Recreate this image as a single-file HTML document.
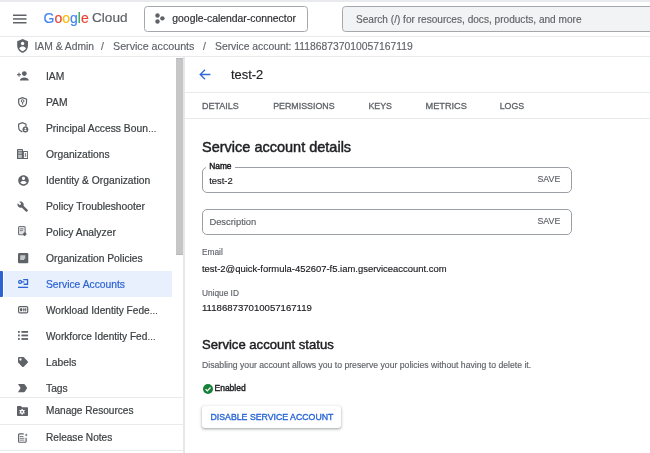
<!DOCTYPE html>
<html><head><meta charset="utf-8">
<style>
*{box-sizing:border-box;margin:0;padding:0}
html,body{width:650px;height:453px;overflow:hidden;background:#fff;font-family:"Liberation Sans",sans-serif;color:#202124}
#wrap{position:absolute;left:0;top:0;width:650px;height:453px;will-change:transform;background:#fff}
.a{position:absolute;white-space:nowrap;line-height:1;-webkit-text-stroke:0.15px currentColor}
svg{position:absolute;overflow:visible}
.ln{position:absolute;background:#e8eaed}
.nt{position:absolute;left:46px;font-size:10.3px;line-height:1;color:#3c4043;-webkit-text-stroke:0.2px currentColor;white-space:nowrap}
.tab{position:absolute;top:101.7px;font-size:9px;line-height:1;color:#5f6368;-webkit-text-stroke:0.3px currentColor;white-space:nowrap}
.ic{fill:#5f6368}
.bc{color:#5f6368;font-size:10.3px;top:42.4px}
</style></head><body><div id="wrap">
<!-- top bar -->
<div class="ln" style="left:0;top:0;width:650px;height:2px"></div>
<svg style="left:13px;top:14px" width="14" height="10" viewBox="0 0 14 10"><rect x="0" y="0.5" width="13.5" height="1.5" fill="#5f6368"/><rect x="0" y="4.2" width="13.5" height="1.5" fill="#5f6368"/><rect x="0" y="8" width="13.5" height="1.5" fill="#5f6368"/></svg>
<div class="a" style="left:43.5px;top:10.8px;font-size:14px;-webkit-text-stroke:0.2px currentColor"><span style="color:#4285f4">G</span><span style="color:#ea4335">o</span><span style="color:#fbbc04">o</span><span style="color:#4285f4">g</span><span style="color:#34a853">l</span><span style="color:#ea4335">e</span></div>
<div class="a" style="left:92px;top:10.8px;font-size:13.6px;color:#5f6368;-webkit-text-stroke:0.2px currentColor">Cloud</div>
<div style="position:absolute;left:144px;top:6px;width:164px;height:25.8px;border:1px solid #a4a8ac;border-radius:3.5px"></div>
<svg style="left:155px;top:12.6px" width="10" height="10" viewBox="0 0 10 10"><circle cx="2.5" cy="2.5" r="2.2" fill="#5f6368"/><circle cx="7.4" cy="5.35" r="2.2" fill="#5f6368"/><circle cx="2.5" cy="8.45" r="2.2" fill="#5f6368"/></svg>
<div class="a" style="left:172.3px;top:13.5px;font-size:10.4px;color:#303134;-webkit-text-stroke:0.2px currentColor">google-calendar-connector</div>
<div style="position:absolute;left:342px;top:5.8px;width:330px;height:26px;border:1px solid #a4a8ac;border-radius:3.5px;background:#f1f3f4"></div>
<div class="a" style="left:356px;top:14.6px;font-size:10.1px;color:#5f6368">Search (/) for resources, docs, products, and more</div>
<div class="ln" style="left:0;top:36px;width:650px;height:1px"></div>
<!-- breadcrumb -->
<svg style="left:16.9px;top:39.3px" width="11.2" height="13.8" viewBox="0 0 12 14.5" preserveAspectRatio="none"><path d="M6 0L.2 2.3V6.8c0 3.6 2.4 6.9 5.8 7.7 3.4-.8 5.8-4.1 5.8-7.7V2.3z" fill="#5f6368"/><circle cx="6" cy="4.8" r="1.85" fill="#fff"/><path d="M2.4 10c.8-1.3 2.1-2 3.6-2s2.8.7 3.6 2c-.8 1.3-2 2.3-3.6 2.8-1.6-.5-2.8-1.5-3.6-2.8z" fill="#fff"/></svg>
<div class="a bc" style="left:34.5px">IAM &amp; Admin</div>
<div class="a bc" style="left:101px">/</div>
<div class="a bc" style="left:113px;font-size:10.7px;top:41px">Service accounts</div>
<div class="a bc" style="left:203px">/</div>
<div class="a bc" style="left:215px;font-size:10.35px">Service account: 111868737010057167119</div>
<div class="ln" style="left:0;top:56px;width:650px;height:1px"></div>
<!-- nav -->
<div class="ln" style="left:183.2px;top:57px;width:1.6px;height:396px;background:#e6e7e9"></div>
<div style="position:absolute;left:176.3px;top:57.5px;width:6.8px;height:197px;background:#c6c6c6;border-top:1px solid #b8b8b8;border-bottom:1px solid #b8b8b8"></div>
<div style="position:absolute;left:4px;top:270.5px;width:168px;height:26px;background:#e8f0fe"></div>
<div style="position:absolute;left:0;top:271px;width:2.5px;height:25.5px;background:#2d63d4;border-radius:0 1px 1px 0"></div>
<div class="nt" style="top:71.5px">IAM</div>
<div class="nt" style="top:97.5px">PAM</div>
<div class="nt" style="top:123.5px">Principal Access Boun<span style="font-size:8.6px">…</span></div>
<div class="nt" style="top:149.5px">Organizations</div>
<div class="nt" style="top:175.5px">Identity &amp; Organization</div>
<div class="nt" style="top:201.5px">Policy Troubleshooter</div>
<div class="nt" style="top:227.5px">Policy Analyzer</div>
<div class="nt" style="top:253.5px">Organization Policies</div>
<div class="nt" style="top:279.5px;color:#2d63d4">Service Accounts</div>
<div class="nt" style="top:305.5px;font-size:10.1px">Workload Identity Fede<span style="font-size:8.6px">…</span></div>
<div class="nt" style="top:331.5px;font-size:10.1px">Workforce Identity Fed<span style="font-size:8.6px">…</span></div>
<div class="nt" style="top:357.5px">Labels</div>
<div class="nt" style="top:383.5px">Tags</div>
<div class="nt" style="top:406.1px;font-size:10.1px">Manage Resources</div>
<div class="nt" style="top:432.9px;font-size:10.1px">Release Notes</div>
<div class="ln" style="left:0;top:397px;width:184px;height:1px"></div>
<div class="ln" style="left:0;top:424px;width:184px;height:1px"></div>
<div class="ln" style="left:0;top:450px;width:184px;height:1px"></div>
<!-- nav icons -->
<svg style="left:17px;top:71px" width="12" height="10" viewBox="0 0 12 10"><circle cx="7.3" cy="2.6" r="2.4" class="ic"/><path d="M2.8 9.5c0-2 2.5-3 4.5-3s4.5 1 4.5 3z" class="ic"/><rect x="0" y="3.1" width="4" height="1.1" class="ic"/><rect x="1.45" y="1.6" width="1.1" height="4" class="ic"/></svg>
<svg style="left:18px;top:96.7px" width="9.2" height="10.3" viewBox="0 0 9.2 10.3"><path d="M4.6 .6L.65 2.1v3c0 2.4 1.7 4.3 3.95 4.6 2.25-.3 3.95-2.2 3.95-4.6v-3z" fill="none" stroke="#5f6368" stroke-width="1.2"/><circle cx="4.6" cy="4" r="1.35" fill="none" stroke="#5f6368" stroke-width="1"/><rect x="4.1" y="5.2" width="1" height="2.4" class="ic"/></svg>
<svg style="left:18px;top:122.4px" width="10.5" height="10.5" viewBox="0 0 10.5 10.5"><path d="M4.4 9.9C2.2 9.3.65 7.4.65 5.1v-3L4.3.6l3.7 1.5v2.6" fill="none" stroke="#5f6368" stroke-width="1.2"/><circle cx="7.4" cy="7.5" r="2.9" class="ic"/><circle cx="7.4" cy="6.6" r=".9" fill="#fff"/><path d="M5.9 9c.3-.8.9-1.2 1.5-1.2s1.2.4 1.5 1.2" fill="#fff"/></svg>
<svg style="left:17px;top:149px" width="11" height="10" viewBox="0 0 11 10"><path d="M.8 0h4.4c.4 0 .8.4.8.8V2h4.2c.4 0 .8.4.8.8V10H0V.8C0 .4.4 0 .8 0z" class="ic"/><rect x="1.2" y="1.1" width="3.6" height="1.2" fill="#d5d7da"/><rect x="1.2" y="3.4" width="3.6" height="1.2" fill="#d5d7da"/><rect x="1.2" y="5.7" width="3.6" height="3.2" fill="#bfc2c6"/><rect x="6.9" y="3" width="3.2" height="6" fill="#fff"/><rect x="7.8" y="4.1" width="1.4" height="3.8" class="ic" opacity=".75"/></svg>
<svg style="left:17.5px;top:174.5px" width="11" height="11" viewBox="0 0 24 24"><path d="M12 2C6.48 2 2 6.48 2 12s4.48 10 10 10 10-4.48 10-10S17.52 2 12 2zm0 3c1.66 0 3 1.34 3 3s-1.34 3-3 3-3-1.34-3-3 1.34-3 3-3zm0 14.2c-2.5 0-4.71-1.28-6-3.22.03-1.99 4-3.08 6-3.08 1.99 0 5.970 1.09 6 3.08-1.29 1.940-3.5 3.22-6 3.22z" class="ic" transform="translate(-1.8 -1.8) scale(1.15)"/></svg>
<svg style="left:17.2px;top:200.6px" width="11.5" height="10.8" viewBox="0 0 24 22.6"><path d="M22.7 19l-9.1-9.1c.9-2.3.4-5-1.5-6.9-2-2-5-2.4-7.4-1.3L9 6 6 9 1.6 4.7C.4 7.1.9 10.1 2.9 12.1c1.9 1.9 4.6 2.4 6.9 1.5l9.1 9.1c.4.4 1 .4 1.4 0l2.3-2.3c.5-.4.5-1.1.1-1.4z" class="ic"/></svg>
<svg style="left:18px;top:226.4px" width="9" height="10.5" viewBox="0 0 9 10.5"><rect x=".55" y=".55" width="6.6" height="8.2" rx="1" fill="#e3e4e6" stroke="#70757a" stroke-width="1.1"/><rect x="1.9" y="2.4" width="3.6" height=".9" fill="#70757a"/><rect x="1.9" y="4.2" width="3" height=".9" fill="#70757a"/><path d="M6.7 6l2.1 2.1-2.1 2.1-2.1-2.1z" fill="#5f6368"/></svg>
<svg style="left:17.8px;top:252.8px" width="10.3" height="10.2" viewBox="0 0 10.3 10.2"><rect x="0" y="0" width="10.3" height="10.2" rx="1.2" class="ic"/><path d="M2.2 2.2h5.1v3.6H6.2v1.3H2.2z" fill="#c4c6c9"/></svg>
<svg style="left:17.9px;top:279.3px" width="10.2" height="9" viewBox="0 0 10.2 9"><circle cx="2.1" cy="2.9" r="1.45" fill="none" stroke="#2d63d4" stroke-width="1.3"/><path d="M3.5 2.9h2.8" stroke="#2d63d4" stroke-width="1.2"/><path d="M5.2 .65h4.35v4.6H5.6" fill="none" stroke="#2d63d4" stroke-width="1.3"/><rect x="0" y="7.7" width="10.1" height="1.3" fill="#2d63d4"/></svg>
<svg style="left:17.8px;top:305.9px" width="10.3" height="7.5" viewBox="0 0 10.3 7.5"><rect x=".6" y=".6" width="9.1" height="6.3" rx="1.2" fill="none" stroke="#5f6368" stroke-width="1.2"/><circle cx="3.2" cy="3.75" r="1.3" class="ic"/><rect x="2.4" y="2.2" width="1.6" height="3.1" class="ic"/><rect x="5.3" y="2.1" width="1" height="3.3" class="ic"/><rect x="7.2" y="2.1" width="1" height="3.3" class="ic"/><rect x="5.3" y="3.3" width="2.9" height=".9" class="ic"/></svg>
<svg style="left:17.8px;top:330.9px" width="10.2" height="9" viewBox="0 0 10.2 9"><rect x="0" y="0" width="1.8" height="1.8" class="ic"/><rect x="0" y="3.55" width="1.8" height="1.8" class="ic"/><rect x="0" y="7.1" width="1.8" height="1.8" class="ic"/><rect x="3.4" y="0" width="6.7" height="1.8" class="ic"/><rect x="3.4" y="3.55" width="6.7" height="1.8" class="ic"/><rect x="3.4" y="7.1" width="6.7" height="1.8" class="ic"/></svg>
<svg style="left:18px;top:357.2px" width="10" height="10" viewBox="0 0 10 10"><path d="M1.3 0H5c.35 0 .6.1.85.35l3.8 3.8c.45.45.45 1.2 0 1.65L5.8 9.65c-.45.45-1.2.45-1.65 0L.35 5.85C.1 5.6 0 5.35 0 5V1.3C0 .6.6 0 1.3 0z" class="ic"/><circle cx="2.5" cy="2.5" r="1.15" fill="#fff"/></svg>
<svg style="left:18.3px;top:383.6px" width="9.2" height="8.2" viewBox="3.5 5 17 14" preserveAspectRatio="none"><path d="M3.5 18.99l11 .01c.67 0 1.27-.33 1.630-.84L20.5 12l-4.37-6.16c-.36-.51-.96-.84-1.63-.84l-11 .01L8.34 12 3.5 18.99z" class="ic"/></svg>
<svg style="left:17.3px;top:406px" width="11" height="10" viewBox="0 0 11 10"><path d="M0 1c0-.6.4-1 1-1h3l1 1.2h5c.6 0 1 .4 1 1V9c0 .6-.4 1-1 1H1c-.6 0-1-.4-1-1z" class="ic"/><g fill="#fff" transform="translate(5.1 5.8)"><circle r="2.1"/><rect x="-.6" y="-2.9" width="1.2" height="5.8"/><rect x="-.6" y="-2.9" width="1.2" height="5.8" transform="rotate(60)"/><rect x="-.6" y="-2.9" width="1.2" height="5.8" transform="rotate(120)"/></g><circle cx="5.1" cy="5.8" r=".9" class="ic"/></svg>
<svg style="left:18px;top:432.6px" width="10" height="10.2" viewBox="0 0 11 10.5"><path d="M6.3 .7H1.4c-.4 0-.7.3-.7.7v7.7c0 .4.3.7.7.7h6.8c.4 0 .7-.3.7-.7V5" fill="none" stroke="#5f6368" stroke-width="1.3"/><rect x="2" y="3" width="4" height=".9" class="ic"/><rect x="2" y="5" width="5" height=".9" class="ic"/><rect x="2" y="7" width="5" height=".9" class="ic"/><path d="M9 0l.5 1.3 1.3.5-1.3.5L9 3.6l-.5-1.3-1.3-.5 1.3-.5z" class="ic"/></svg>
<!-- main header -->
<svg style="left:199.2px;top:69px" width="12" height="11" viewBox="0 0 12 11"><path d="M11.4 5.5H1.2M6 .8L1.2 5.5 6 10.2" fill="none" stroke="#2f68d8" stroke-width="1.3"/></svg>
<div class="a" style="left:231px;top:68.8px;font-size:12.9px;color:#202124">test-2</div>
<div class="ln" style="left:185px;top:92px;width:465px;height:1px"></div>
<div class="tab" style="left:202px">DETAILS</div>
<div class="tab" style="left:273.2px;font-size:8.85px;top:101.8px">PERMISSIONS</div>
<div class="tab" style="left:368.5px;font-size:8.8px">KEYS</div>
<div class="tab" style="left:425.5px;font-size:9.2px;top:101.7px">METRICS</div>
<div class="tab" style="left:499.7px;font-size:8.8px">LOGS</div>
<div class="ln" style="left:185px;top:118px;width:465px;height:1px"></div>
<!-- details -->
<div class="a" style="left:202px;top:139.6px;font-size:14.5px;color:#202124;-webkit-text-stroke:0.45px currentColor">Service account details</div>
<div style="position:absolute;left:202px;top:167px;width:370px;height:26px;border:1px solid #9aa0a6;border-radius:5px"></div>
<div style="position:absolute;left:206.4px;top:165px;width:28.7px;height:4px;background:#fff"></div>
<div class="a" style="left:209.2px;top:162.4px;font-size:8.4px;color:#202124;-webkit-text-stroke:0.45px currentColor">Name</div>
<div class="a" style="left:209.2px;top:175.9px;font-size:9.4px;color:#202124">test-2</div>
<div class="a" style="left:537.5px;top:175.1px;font-size:8.8px;color:#5f6368">SAVE</div>
<div style="position:absolute;left:202px;top:209px;width:370px;height:26px;border:1px solid #9aa0a6;border-radius:5px"></div>
<div class="a" style="left:209.4px;top:217.3px;font-size:9.4px;color:#5f6368">Description</div>
<div class="a" style="left:537.5px;top:217px;font-size:8.8px;color:#5f6368">SAVE</div>
<div class="a" style="left:202px;top:247.9px;font-size:8.3px;color:#5f6368">Email</div>
<div class="a" style="left:202px;top:264.1px;font-size:9.45px;color:#202124">test-2@quick-formula-452607-f5.iam.gserviceaccount.com</div>
<div class="a" style="left:202px;top:289px;font-size:8.3px;color:#5f6368">Unique ID</div>
<div class="a" style="left:202px;top:303.3px;font-size:9.6px;color:#202124">111868737010057167119</div>
<div class="a" style="left:202px;top:337.6px;font-size:13.1px;color:#202124;-webkit-text-stroke:0.45px currentColor">Service account status</div>
<div class="a" style="left:202px;top:360.6px;font-size:8.66px;color:#5f6368">Disabling your account allows you to preserve your policies without having to delete it.</div>
<svg style="left:203.4px;top:383.6px" width="10" height="10" viewBox="0 0 10 10"><circle cx="5" cy="5" r="5" fill="#188038"/><path d="M2.6 5.1l1.7 1.7 3.2-3.3" fill="none" stroke="#fff" stroke-width="1.2"/></svg>
<div class="a" style="left:214.5px;top:383.6px;font-size:8.5px;color:#202124;-webkit-text-stroke:0.4px currentColor">Enabled</div>
<div style="position:absolute;left:202px;top:405.5px;width:139px;height:22px;border-radius:3px;background:#fff;box-shadow:0 1px 2px rgba(60,64,67,.3),0 1px 3px 1px rgba(60,64,67,.15)"></div>
<div class="a" style="left:210.5px;top:412.6px;font-size:8.75px;color:#2a66d6;-webkit-text-stroke:0.35px currentColor">DISABLE SERVICE ACCOUNT</div>
</div></body></html>
